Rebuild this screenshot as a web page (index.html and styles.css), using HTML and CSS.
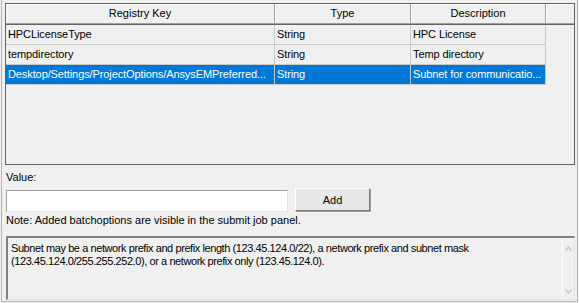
FILE: index.html
```html
<!DOCTYPE html>
<html lang="en">
<head>
    <meta charset="UTF-8">
    <title>Batch Options</title>
    <link rel="stylesheet" href="styles.css">
</head>
<body>
    <div class="panel">
        <div class="grid">
            <div class="grid-head">
                <div class="head-cell col-key">Registry Key</div>
                <div class="head-cell col-type">Type</div>
                <div class="head-cell col-desc">Description</div>
                <div class="head-cell col-end"></div>
            </div>
            <div class="grid-row">
                <div class="cell col-key">HPCLicenseType</div>
                <div class="cell col-type">String</div>
                <div class="cell col-desc">HPC License</div>
            </div>
            <div class="grid-row">
                <div class="cell col-key">tempdirectory</div>
                <div class="cell col-type">String</div>
                <div class="cell col-desc">Temp directory</div>
            </div>
            <div class="grid-row selected">
                <div class="cell col-key">Desktop/Settings/ProjectOptions/AnsysEMPreferred...</div>
                <div class="cell col-type">String</div>
                <div class="cell col-desc">Subnet for communicatio...</div>
            </div>
        </div>

        <div class="value-label">Value:</div>
        <div class="value-row">
            <input type="text" class="value-input">
            <button class="add-btn">Add</button>
        </div>
        <div class="note">Note: Added batchoptions are visible in the submit job panel.</div>

        <div class="help-box">
            <div class="help-text">Subnet may be a network prefix and prefix length (123.45.124.0/22), a network prefix and subnet mask (123.45.124.0/255.255.252.0), or a network prefix only (123.45.124.0).</div>
            <div class="help-scroll">
                <svg class="arrow" width="7" height="5" viewBox="0 0 7 5"><path d="M0.5 4.5 L3.5 1 L6.5 4.5" fill="none" stroke="#c2c2c2" stroke-width="1.3"/></svg>
                <svg class="arrow" width="7" height="5" viewBox="0 0 7 5"><path d="M0.5 0.5 L3.5 4 L6.5 0.5" fill="none" stroke="#c2c2c2" stroke-width="1.3"/></svg>
            </div>
        </div>
    </div>
</body>
</html>
```

FILE: styles.css
```css
body {
    margin: 0;
    background: #f0f0f0;
    font-family: "Liberation Sans", Arial, sans-serif;
    font-size: 11px;
    color: #000;
}
.panel {
    margin-left: 1px;
    width: 577px;
    height: 302px;
    border-left: 1px solid #b4b4b4;
    border-right: 1px solid #b4b4b4;
    border-bottom: 1px solid #b4b4b4;
    padding: 3px 2px 0 3px;
    box-sizing: border-box;
}
.grid {
    height: 162px;
    border: 1px solid #646464;
    box-sizing: border-box;
    background: #f0f0f0;
}
.grid-head {
    display: flex;
    height: 20px;
    border-bottom: 1px solid #646464;
}
.head-cell {
    text-align: center;
    line-height: 18px;
    border-right: 1px solid #a0a0a0;
    border-bottom: 1px solid #a0a0a0;
    box-shadow: inset 1px 1px 0 #fff;
    box-sizing: border-box;
}
.col-key { width: 269px; }
.col-type { width: 136px; }
.col-desc { width: 135px; }
.col-end { width: 28px; border-right: none; }
.grid-row {
    display: flex;
    height: 20px;
}
.cell {
    box-sizing: border-box;
    height: 20px;
    line-height: 19px;
    padding-left: 2px;
    border-right: 1px solid #c8c8c8;
    border-bottom: 1px solid #c8c8c8;
    white-space: nowrap;
    letter-spacing: -0.1px;
}
.grid-row.selected .cell {
    background: #0078d7;
    color: #fff;
}
.value-label {
    margin-top: 5px;
    line-height: 14px;
    padding-left: 1px;
}
.value-row {
    display: flex;
    align-items: center;
    gap: 7px;
    margin-top: 6px;
    padding-left: 1px;
}
.value-input {
    width: 282px;
    height: 22px;
    box-sizing: border-box;
    border: 1px solid #a0a0a0;
    border-right-color: #e3e3e3;
    border-bottom-color: #e3e3e3;
    background: #fff;
    margin: 0;
    outline: none;
}
.add-btn {
    width: 75px;
    height: 23px;
    box-sizing: border-box;
    background: #e8e8e8;
    border: 1px solid #fff;
    border-right-color: #7a7a7a;
    border-bottom-color: #7a7a7a;
    box-shadow: 1px 1px 0 #a0a0a0;
    font-family: "Liberation Sans", Arial, sans-serif;
    font-size: 11px;
    padding: 0;
    margin-top: -3px;
}
.note {
    margin-top: 1px;
    line-height: 14px;
    padding-left: 1px;
}
.help-box {
    display: flex;
    margin-top: 9px;
    margin-left: 1px;
    height: 64px;
    border: 1px solid #e3e3e3;
    border-top: 2px solid #828282;
    border-left: 2px solid #828282;
    box-sizing: border-box;
}
.help-text {
    flex-grow: 1;
    padding: 4px 20px 0 3px;
    line-height: 13px;
    letter-spacing: -0.42px;
}
.help-scroll {
    width: 17px;
    border-left: 1px solid #fff;
    display: flex;
    flex-direction: column;
    justify-content: space-between;
    align-items: center;
    padding: 8px 0 5px;
    box-sizing: border-box;
}
.arrow {
    display: block;
}
```
